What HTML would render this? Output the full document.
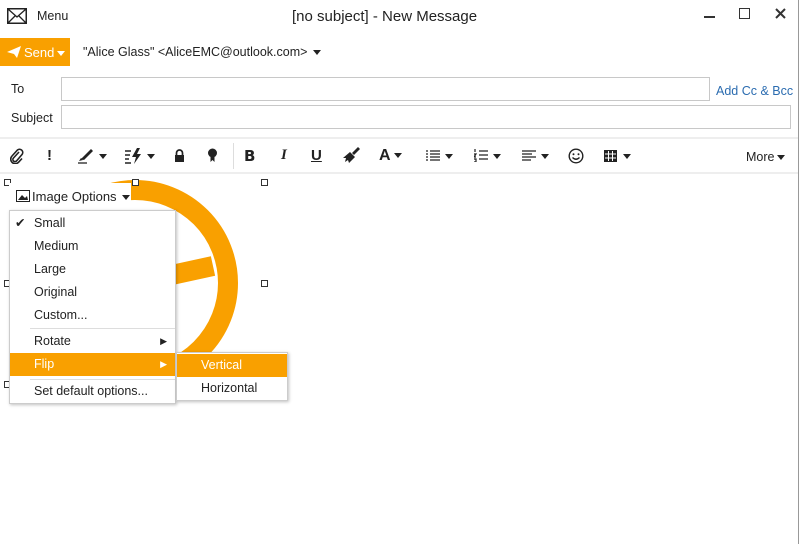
<!DOCTYPE html>
<html><head><meta charset="utf-8"><style>
*{margin:0;padding:0;box-sizing:border-box}
body{width:800px;height:544px;background:#fff;font-family:"Liberation Sans",sans-serif;font-size:13px;color:#222;position:relative;overflow:hidden}
.a{position:absolute}
.t{position:absolute;white-space:nowrap}
.inp{position:absolute;border:1px solid #c8c8c8;background:#fff}
.h{position:absolute;width:7px;height:7px;border:1.5px solid #333;background:#fff}
.mi{position:absolute;left:0;width:100%;height:23px;line-height:23px;padding-left:24px;font-size:12.5px}
.tb{position:absolute;top:147px;font-size:15px;font-weight:bold;color:#222}
.car{display:inline-block;border-left:4px solid transparent;border-right:4px solid transparent;border-top:5px solid #222;vertical-align:middle;margin-left:3px}
</style></head><body>
<div class="a" style="right:1px;top:0;width:1px;height:544px;background:#999"></div>
<svg class="a" style="left:7px;top:8px" width="20" height="16"><rect x="0.75" y="0.75" width="18.5" height="14.5" fill="none" stroke="#222" stroke-width="1.5"/><path d="M1 1 L10 9 L19 1 M1 15 L8 8 M19 15 L12 8" fill="none" stroke="#222" stroke-width="1.3"/></svg>
<div class="t" style="left:37px;top:9px;font-size:12.5px">Menu</div>
<div class="t" style="left:292px;top:8px;font-size:15px">[no subject] - New Message</div>
<div class="a" style="left:704px;top:16px;width:11px;height:1.5px;background:#333"></div>
<div class="a" style="left:739px;top:8px;width:11px;height:11px;border:1.5px solid #333"></div>
<svg class="a" style="left:775px;top:8px" width="11" height="11"><path d="M1 1L10 10M10 1L1 10" stroke="#333" stroke-width="2"/></svg>
<div class="a" style="left:0;top:38px;width:70px;height:28px;background:#f9a000"></div>
<svg class="a" style="left:7px;top:46px" width="14" height="12"><path d="M0 6 L14 0 L10 12 L7 8 Z" fill="#fff"/></svg>
<div class="t" style="left:24px;top:45px;color:#fff;font-size:13px">Send<span class="car" style="border-top-color:#fff"></span></div>
<div class="t" style="left:83px;top:45px;font-size:12.5px">"Alice Glass" &lt;AliceEMC@outlook.com&gt;<span class="car" style="margin-left:6px"></span></div>
<div class="t" style="left:11px;top:82px;font-size:12.5px">To</div>
<div class="inp" style="left:61px;top:77px;width:649px;height:24px"></div>
<div class="t" style="left:716px;top:84px;font-size:12.5px;color:#2b6cb0">Add Cc &amp; Bcc</div>
<div class="t" style="left:11px;top:111px;font-size:12.5px">Subject</div>
<div class="inp" style="left:61px;top:105px;width:730px;height:24px"></div>
<div class="a" style="left:0;top:137px;width:798px;height:2px;background:#eee"></div>
<div class="a" style="left:0;top:172px;width:798px;height:2px;background:#eee"></div>
<div class="a" style="left:233px;top:143px;width:1px;height:26px;background:#ddd"></div>
<svg class="a" style="left:10px;top:148px" width="14" height="16"><path d="M9 4 L3.5 10 a2 2 0 0 0 3 3 L12 6.5 a3.2 3.2 0 0 0 -4.5 -4.5 L2 8 a4.5 4.5 0 0 0 6.5 6.3 L12 10.5" fill="none" stroke="#222" stroke-width="1.6"/></svg>
<div class="tb" style="left:47px">!</div>
<svg class="a" style="left:77px;top:147px" width="18" height="17"><path d="M4 12 L14 2 L16 4 L7 13 Z" fill="#222"/><path d="M1 16 H10" stroke="#222" stroke-width="1.3"/><path d="M2 14 L4 11 L6 13Z" fill="#222"/></svg>
<span class="car a" style="left:96px;top:154px"></span>
<svg class="a" style="left:124px;top:148px" width="20" height="16"><path d="M1 3H7M1 7H6M1 11H5M1 15H7" stroke="#222" stroke-width="1.4"/><path d="M13 0 L8 9 H12 L10 16 L17 6 H13 L16 0Z" fill="#222"/></svg>
<span class="car a" style="left:144px;top:154px"></span>
<svg class="a" style="left:174px;top:149px" width="11" height="13"><path d="M2.5 6 V4 a3 3 0 0 1 6 0 V6" fill="none" stroke="#222" stroke-width="1.7"/><rect x="1" y="6" width="9" height="7" fill="#222"/></svg>
<svg class="a" style="left:207px;top:148px" width="11" height="15"><circle cx="5.5" cy="5" r="4.5" fill="#222"/><path d="M3.5 9 L3.5 14 L5.5 12 L7.5 14 L7.5 9Z" fill="#222"/></svg>
<div class="tb" style="left:244px;font-family:'DejaVu Sans'">B</div>
<div class="tb" style="left:281px;font-style:italic;font-family:'Liberation Serif'">I</div>
<div class="tb" style="left:311px;text-decoration:underline">U</div>
<svg class="a" style="left:343px;top:147px" width="17" height="17"><path d="M9 6 L15 0 L17 2 L11 8Z" fill="#222"/><path d="M7 5 L12 10 L6 16 L5 13 L2 15 L3 11 L0 11Z" fill="#222"/></svg>
<div class="tb" style="left:379px;font-size:16px">A<span class="car"></span></div>
<svg class="a" style="left:426px;top:150px" width="14" height="11"><path d="M0 1H2M0 4H2M0 7H2M0 10H2M4 1H14M4 4H14M4 7H14M4 10H14" stroke="#222" stroke-width="1.3"/></svg>
<span class="car a" style="left:442px;top:154px"></span>
<svg class="a" style="left:474px;top:149px" width="14" height="13"><path d="M1 0V3M0 5H2L0 8H2M0 10H2V13H0M5 2H14M5 6H14M5 10H14" stroke="#222" stroke-width="1.2" fill="none"/></svg>
<span class="car a" style="left:490px;top:154px"></span>
<svg class="a" style="left:522px;top:150px" width="14" height="11"><path d="M0 1H14M0 4H10M0 7H14M0 10H9" stroke="#222" stroke-width="1.3"/></svg>
<span class="car a" style="left:538px;top:154px"></span>
<svg class="a" style="left:568px;top:148px" width="16" height="16"><circle cx="8" cy="8" r="6.8" fill="none" stroke="#222" stroke-width="1.4"/><circle cx="5.5" cy="6.3" r="1" fill="#222"/><circle cx="10.5" cy="6.3" r="1" fill="#222"/><path d="M4.5 9.5 Q8 13 11.5 9.5" fill="none" stroke="#222" stroke-width="1.3"/></svg>
<svg class="a" style="left:604px;top:150px" width="13" height="12"><rect width="13" height="12" fill="#222"/><path d="M1 4H12M1 8H12M4.5 1V11M8.5 1V11" stroke="#fff" stroke-width="1"/></svg>
<span class="car a" style="left:620px;top:154px"></span>
<div class="t" style="left:746px;top:150px;font-size:12.5px">More<span class="car"></span></div>
<svg class="a" style="left:0;top:170px" width="300" height="260">
<circle cx="135" cy="113" r="93" fill="none" stroke="#f9a000" stroke-width="20"/>
<path d="M135 113 L213 96 M135 113 L60 80 M135 113 L135 200" stroke="#f9a000" stroke-width="20"/>
</svg>
<div class="h" style="left:4px;top:179px"></div><div class="h" style="left:132px;top:179px"></div><div class="h" style="left:261px;top:179px"></div>
<div class="h" style="left:4px;top:280px"></div><div class="h" style="left:261px;top:280px"></div>
<div class="h" style="left:4px;top:381px"></div>
<div class="a" style="left:9px;top:183px;width:122px;height:28px;background:#fff"></div>
<svg class="a" style="left:16px;top:190px" width="14" height="12"><rect x=".5" y=".5" width="13" height="11" fill="none" stroke="#222"/><path d="M2 10 L6 5 L9 8 L11 6 L12 10Z" fill="#222"/></svg>
<div class="t" style="left:32px;top:189px;font-size:13px">Image Options<span class="car" style="margin-left:5px"></span></div>
<div class="a" style="left:9px;top:210px;width:167px;height:194px;background:#fff;border:1px solid #ccc;box-shadow:1px 1px 3px rgba(0,0,0,.25)">
<div class="mi" style="top:1px"><span style="position:absolute;left:5px">✔</span>Small</div>
<div class="mi" style="top:24px">Medium</div>
<div class="mi" style="top:47px">Large</div>
<div class="mi" style="top:70px">Original</div>
<div class="mi" style="top:93px">Custom...</div>
<div class="a" style="left:20px;top:117px;width:145px;height:1px;background:#ddd"></div>
<div class="mi" style="top:119px">Rotate<span style="position:absolute;right:8px;font-size:9px">▶</span></div>
<div class="mi" style="top:142px;background:#f9a000;color:#fff">Flip<span style="position:absolute;right:8px;font-size:9px">▶</span></div>
<div class="a" style="left:20px;top:168px;width:145px;height:1px;background:#ddd"></div>
<div class="mi" style="top:169px">Set default options...</div>
</div>
<div class="a" style="left:176px;top:352px;width:112px;height:49px;background:#fff;border:1px solid #ccc;box-shadow:1px 1px 3px rgba(0,0,0,.25)">
<div class="mi" style="top:1px;background:#f9a000;color:#fff">Vertical</div>
<div class="mi" style="top:24px">Horizontal</div>
</div>
</body></html>
